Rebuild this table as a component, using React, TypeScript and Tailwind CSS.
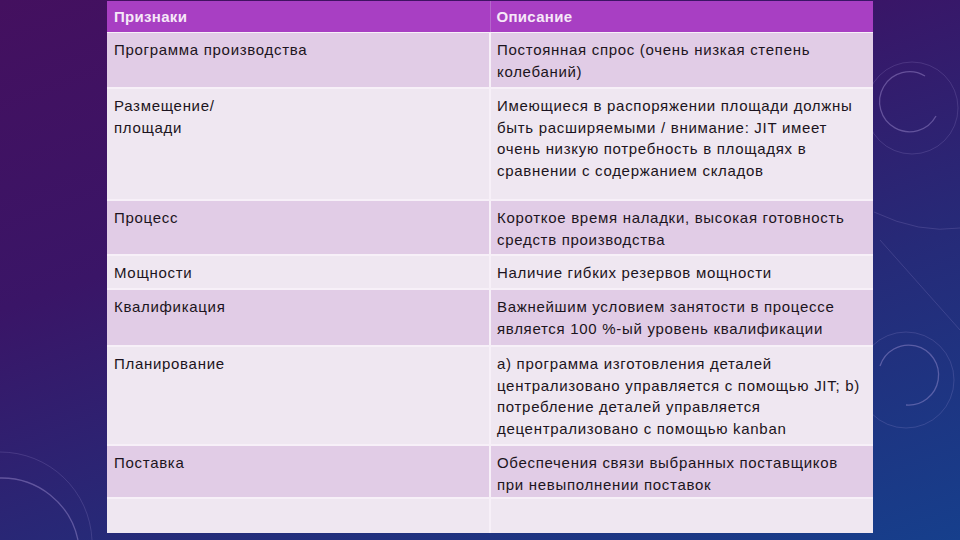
import React from "react";

const rows = [
  { a: "Программа производства", b: "Постоянная спрос (очень низкая степень колебаний)", h: "h-[54px]", dark: true },
  { a: "Размещение/ площади", b: "Имеющиеся в распоряжении площади должны быть расширяемыми / внимание: JIT имеет очень низкую потребность в площадях в сравнении  с содержанием складов", h: "h-[110px]", dark: false },
  { a: "Процесс", b: "Короткое время наладки, высокая готовность средств производства", h: "h-[53px]", dark: true },
  { a: "Мощности", b: "Наличие гибких резервов мощности", h: "h-[32px]", dark: false },
  { a: "Квалификация", b: "Важнейшим условием занятости в процессе является 100 %-ый уровень квалификации", h: "h-[55px]", dark: true },
  { a: "Планирование", b: "а) программа изготовления деталей централизовано управляется с помощью JIT; b) потребление  деталей управляется децентрализовано с помощью kanban", h: "h-[97px]", dark: false },
  { a: "Поставка", b: "Обеспечения связи выбранных поставщиков при невыполнении поставок", h: "h-[51px]", dark: true },
  { a: "", b: "", h: "h-[34px]", dark: false },
];

const Decor: React.FC = () => (
  <svg className="absolute inset-0 pointer-events-none" width="960" height="540" viewBox="0 0 960 540" fill="none">
    <g stroke="#b9a6e6" strokeOpacity="0.38" strokeWidth="1.3">
      <path d="M 925 76 A 30 30 0 1 0 936 116" />
      <path d="M 880 366 A 30 30 0 1 1 906 405" />
      <path d="M 0 478 A 78 78 0 0 1 78 540" />
    </g>
    <g stroke="#b9a6e6" strokeOpacity="0.18" strokeWidth="1">
      <circle cx="912" cy="108" r="46" />
      <circle cx="906" cy="380" r="48" />
      <path d="M 0 452 A 92 92 0 0 1 92 540" />
      <path d="M 874 212 Q 920 234 960 228" />
      <path d="M 880 240 L 960 330" />
    </g>
  </svg>
);

export default function App() {
  return (
    <div
      className="relative w-[960px] h-[540px] overflow-hidden bg-[linear-gradient(160deg,#44105f_0%,#3a1567_35%,#262a78_65%,#163f8c_100%)]"
      style={{ fontFamily: '"Liberation Sans", Arial, sans-serif' }}
    >
      <Decor />
      <div className="relative ml-[107px] mt-[1px] w-[766px] flex flex-col gap-[1px] bg-[#f7f0f8] text-[15px] leading-[21.5px] tracking-[0.7px] text-[#1c1420]">
        <div className="grid grid-cols-2 gap-[1px] h-[31px] bg-[#b566cc]">
          <div className="bg-[#a83fc3] pl-[7px] pt-[5px] font-bold tracking-[0.3px] text-[#f6e8f8]">Признаки</div>
          <div className="bg-[#a83fc3] pl-[6px] pt-[5px] font-bold tracking-[0.3px] text-[#f6e8f8]">Описание</div>
        </div>
        {rows.map((r, i) => (
          <div key={i} className={`grid grid-cols-2 gap-[2px] ${r.h} ${i > 0 ? "mt-[1px]" : ""}`}>
            <div className={`${r.dark ? "bg-[#e1cce6]" : "bg-[#efe7f1]"} pl-[7px] pr-[8px] pt-[6px]`}>
              {r.a === "Размещение/ площади" ? (<>Размещение/<br />площади</>) : r.a}
            </div>
            <div className={`${r.dark ? "bg-[#e1cce6]" : "bg-[#efe7f1]"} pl-[6px] pr-[6px] pt-[6px]`}>{r.b}</div>
          </div>
        ))}
      </div>
    </div>
  );
}
